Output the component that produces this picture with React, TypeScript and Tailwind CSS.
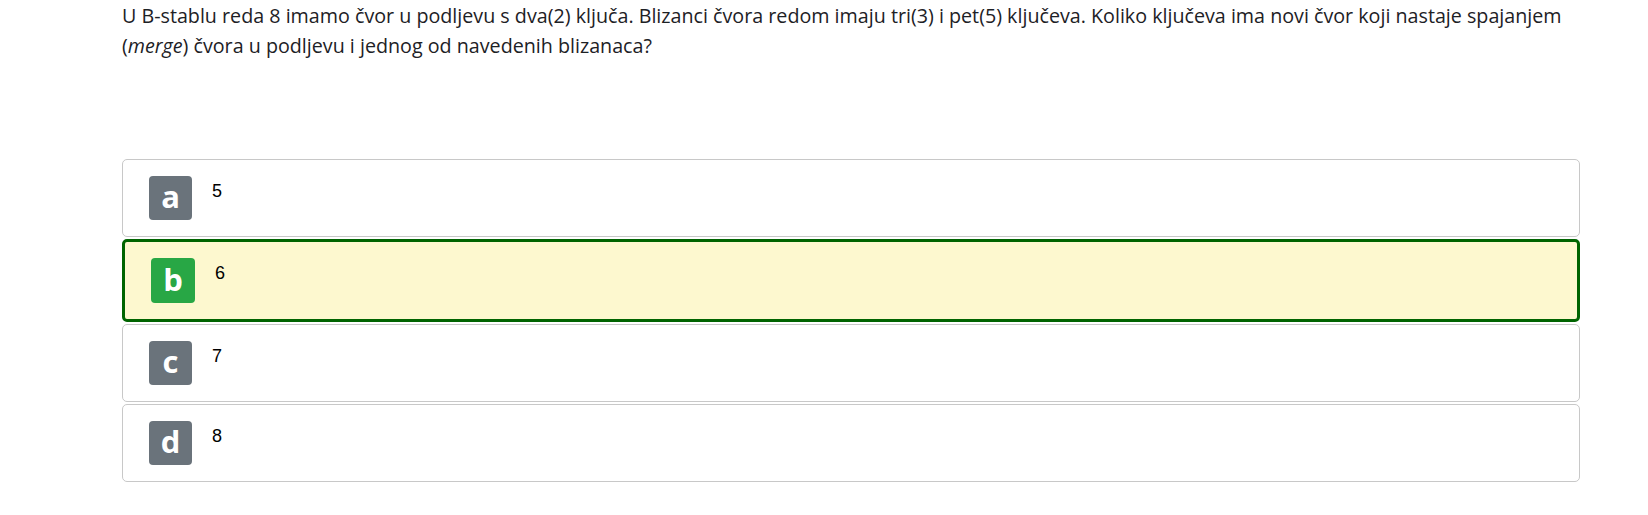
const options = [
  { letter: "a", text: "5", selected: false },
  { letter: "b", text: "6", selected: true },
  { letter: "c", text: "7", selected: false },
  { letter: "d", text: "8", selected: false },
];

export default function App() {
  return (
    <div className="min-h-[515px] bg-white">
      <div className="ml-[122px] w-[1458px] pt-[1px]">
        {/* Question */}
        <p
          className="text-[19.7px] leading-[30px] text-[#1d2125] whitespace-nowrap"
          style={{ fontFamily: '"Open Sans", "Noto Sans", sans-serif' }}
        >
          U B-stablu reda 8 imamo čvor u podljevu s dva(2) ključa. Blizanci čvora redom imaju tri(3) i pet(5) ključeva. Koliko ključeva ima novi čvor koji nastaje spajanjem
          <br />
          (<em>merge</em>) čvora u podljevu i jednog od navedenih blizanaca?
        </p>

        {/* Answers */}
        <div className="mt-[98px] flex flex-col gap-[2px]">
          {options.map((o) => (
            <div
              key={o.letter}
              className={
                o.selected
                  ? "flex items-start rounded-[5px] border-[3px] border-[#006400] bg-[#fdf8cf] pl-[26px] py-[16px]"
                  : "flex items-start rounded-[5px] border border-[#c8c8c8] bg-white pl-[26px] py-[16px]"
              }
            >
              <span
                className={
                  o.selected
                    ? "flex h-[45px] w-[44px] items-center justify-center rounded-[4px] bg-[#28a745] text-[31px] font-bold leading-none text-white"
                    : "flex h-[44px] w-[43px] items-center justify-center rounded-[4px] bg-[#6a737b] text-[31px] font-bold leading-none text-white"
                }
                style={{ fontFamily: '"Open Sans", "Noto Sans", sans-serif' }}
              >
                <span className="-mt-[3px]">{o.letter}</span>
              </span>
              <span
                className="ml-[20px] mt-[2px] text-[18px] leading-[27px] text-black"
                style={{ fontFamily: '"Liberation Sans", Arial, sans-serif' }}
              >
                {o.text}
              </span>
            </div>
          ))}
        </div>
      </div>
    </div>
  );
}
